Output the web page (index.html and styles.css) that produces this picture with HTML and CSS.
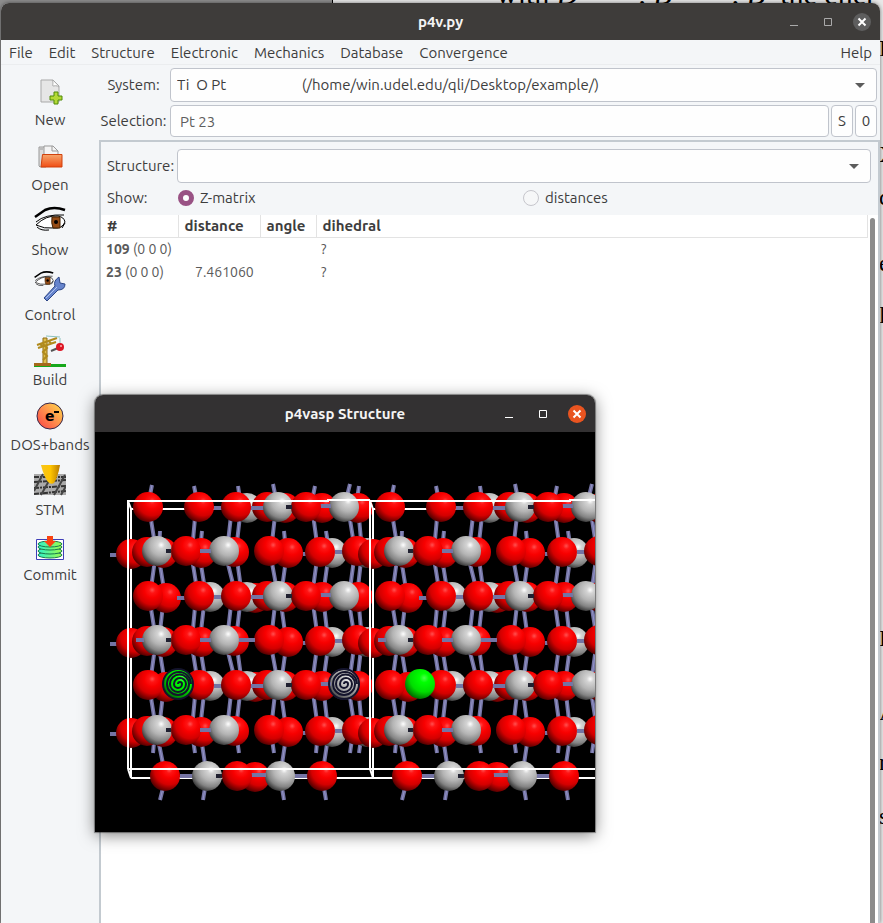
FILE: index.html
```html
<!DOCTYPE html>
<html lang="en">
  <head>
    <meta charset="utf-8">
    <title>p4v.py</title>
    <link rel="stylesheet" href="styles.css">
  </head>
  <body>
    <!-- paper lying behind the windows -->
    <div class="paper">
      <p class="paper-line">with <i>D</i><span class="gap"></span>, <i>B</i><span class="gap"></span>, <i>B</i> &nbsp;the ener</p>
      <span class="edge edge-1">H</span>
      <span class="edge edge-2">X</span>
      <span class="edge edge-3">c</span>
      <span class="edge edge-4">e</span>
      <span class="edge edge-5">l</span>
      <span class="edge edge-6">L</span>
      <span class="edge edge-7">A</span>
      <span class="edge edge-8">r</span>
      <span class="edge edge-9">s</span>
    </div>

    <div class="window">
      <header class="titlebar">
        <h1>p4v.py</h1>
        <div class="controls">
          <button type="button" aria-label="Minimize"><svg width="18" height="18"><path d="M5 12.500h8"/></svg></button>
          <button type="button" aria-label="Maximize"><svg width="18" height="18"><path d="M5.500 5.500h7v7h-7z"/></svg></button>
          <button type="button" class="close" aria-label="Close"><svg width="18" height="18"><path d="M5.500 5.500l7 7m0-7l-7 7"/></svg></button>
        </div>
      </header>

      <nav class="menubar">
        <a href="#">File</a>
        <a href="#">Edit</a>
        <a href="#">Structure</a>
        <a href="#">Electronic</a>
        <a href="#">Mechanics</a>
        <a href="#">Database</a>
        <a href="#">Convergence</a>
        <a href="#" class="help">Help</a>
      </nav>

      <div class="content">
        <aside class="toolbar">
          <button type="button">
            <svg width="32" height="32" viewBox="0 0 32 32">
              <path d="M7 5h12l6 6v16H7z" fill="#e6e6e6" stroke="#a9a9a9"/>
              <path d="M18 5c2 2 0 6 1 6s4-1 6 1" fill="#fff" stroke="#a9a9a9"/>
              <path d="M21 18h4v4h4v4h-4v4h-4v-4h-4v-4h4z" transform="translate(-1 -1)" fill="#b4d936" stroke="#4e8a06"/>
            </svg>
            New
          </button>
          <button type="button">
            <svg width="32" height="32" viewBox="0 0 32 32">
              <path d="M5 7h7v20H6l-1-1z" fill="#ddd" stroke="#999"/>
              <path d="M10 6h9l5 5v12H10z" fill="#f4f4f4" stroke="#999"/>
              <path d="M18 6v5h6M6 9h3" fill="none" stroke="#999"/>
              <path d="M8.500 14.500H28V27H7z" fill="url(#folder)" stroke="#d0400c"/>
            </svg>
            Open
          </button>
          <button type="button">
            <svg width="32" height="32" viewBox="0 0 32 32">
              <g id="eye">
                <path d="M1 12L11 5Q20 1 31 5" fill="none" stroke="#000" stroke-width="2.500"/>
                <path d="M2 17Q11 9 30 10M2 20Q12 10 24 11Q30 12 31 17Q28 24 20 23Q10 24 2 20z" fill="#fff" stroke="#000"/>
                <path d="M18 12h8v11h-7q-2-5-1-11z" fill="#964c16" stroke="#402000"/>
                <circle cx="22" cy="17" r="2"/>
                <path d="M3 22q4 4 12 3M28 23l3-5" fill="none" stroke="#000"/>
              </g>
            </svg>
            Show
          </button>
          <button type="button">
            <svg width="32" height="32" viewBox="0 0 32 32">
              <use href="#eye" transform="scale(.62)"/>
              <path d="M10 28l11-12q-2-5 4-9l1 6 5 1q0 6-7 6L13 31z" fill="#6684cc" stroke="#2d4686"/>
              <path d="M12 28l11-11" stroke="#aec3f0" fill="none"/>
            </svg>
            Control
          </button>
          <button type="button">
            <svg width="32" height="32" viewBox="0 0 32 32">
              <path d="M0 29h32v3H0z" fill="#16a81b"/>
              <path d="M0 28h17v3H0z" fill="#a5691b"/>
              <path d="M9 28V3h4v25" fill="#e0c050" stroke="#8e6a10"/>
              <path d="M3 10l20-7M4 13l18-6M6 9l3 3M14 6l3 2M9 9l4 4-4 4 4 4-4 4" fill="none" stroke="#b08a1c" stroke-width="2"/>
              <path d="M26 3v8M12 1l14 1" stroke="#8bc2be" fill="none"/>
              <path d="M17 16l7-3" stroke="#555" stroke-width="2"/>
              <circle cx="26" cy="12" r="4" fill="#dc1624"/>
              <circle cx="27" cy="11" r="1" fill="#ffb0b0"/>
            </svg>
            Build
          </button>
          <button type="button">
            <svg width="32" height="32" viewBox="0 0 32 32">
              <circle cx="16" cy="16" r="13" fill="url(#electron)" stroke="#35264a"/>
              <text x="11" y="21" class="electron">e</text>
              <path d="M20 12h5" stroke="#000" stroke-width="2"/>
            </svg>
            DOS+bands
          </button>
          <button type="button">
            <svg width="32" height="32" viewBox="0 0 32 32">
              <path d="M0 9h32v21H0z" fill="#aaa"/>
              <path d="M0 12h32M0 17l32-2M0 23l32-2M0 29l32-3" stroke="#333" stroke-width="2" stroke-dasharray="5 1 2 1"/>
              <path d="M9 9L0 26M31 10L20 30M16 14L7 30M32 21l-5 9" stroke="#444" stroke-width="2"/>
              <path d="M7 0h19q-2 12-6 18-3 2-6-1Q10 12 7 0z" fill="url(#tip)"/>
            </svg>
            STM
          </button>
          <button type="button">
            <svg width="32" height="32" viewBox="0 0 32 32">
              <path d="M2.500 9.500h27v20h-27z" fill="#fff" stroke="#3e3eb8"/>
              <g fill="url(#disk)" stroke="#18794c">
                <ellipse cx="16" cy="25" rx="12" ry="3"/>
                <ellipse cx="16" cy="21" rx="12" ry="3"/>
                <ellipse cx="16" cy="17" rx="12" ry="3"/>
                <ellipse cx="16" cy="14" rx="12" ry="3"/>
              </g>
              <path d="M13 6h6v5h3l-6 6-6-6h3z" fill="#fa4210"/>
            </svg>
            Commit
          </button>
        </aside>

        <main>
          <div class="field">
            <label for="system">System:</label>
            <div class="dropdown">
              <select id="system">
                <option>Ti&nbsp; O Pt&nbsp;&nbsp;&nbsp;&nbsp;&nbsp;&nbsp;&nbsp;&nbsp;&nbsp;&nbsp;&nbsp;&nbsp;&nbsp;&nbsp;&nbsp;&nbsp;&nbsp;&nbsp;&nbsp;&nbsp;&nbsp;&nbsp;(/home/win.udel.edu/qli/Desktop/example/)</option>
              </select>
            </div>
          </div>
          <div class="field">
            <label for="selection">Selection:</label>
            <input type="text" id="selection" value="Pt 23">
            <button type="button">S</button>
            <button type="button">0</button>
          </div>

          <section class="panel">
            <div class="structure-row">
              <label for="structure">Structure:</label>
              <div class="dropdown">
                <select id="structure"><option></option></select>
              </div>
            </div>
            <div class="show-row">
              <span>Show:</span>
              <label><input type="radio" name="show" checked>Z-matrix</label>
              <label><input type="radio" name="show">distances</label>
            </div>
            <div class="list">
              <table>
                <thead>
                  <tr><th class="num">#</th><th class="dist">distance</th><th class="angle">angle</th><th>dihedral</th></tr>
                </thead>
                <tbody>
                  <tr><td><b>109</b> (0 0 0)</td><td></td><td></td><td>?</td></tr>
                  <tr><td><b>23</b> (0 0 0)</td><td class="value">7.461060</td><td></td><td>?</td></tr>
                </tbody>
              </table>
              <div class="scrollbar"></div>
            </div>
          </section>
        </main>
      </div>
    </div>

    <div class="window viewer">
      <header class="titlebar">
        <h2>p4vasp Structure</h2>
        <div class="controls">
          <button type="button" aria-label="Minimize"><svg width="18" height="18"><path d="M5 12.500h8"/></svg></button>
          <button type="button" aria-label="Maximize"><svg width="18" height="18"><path d="M5.500 5.500h7v7h-7z"/></svg></button>
          <button type="button" class="close" aria-label="Close"><svg width="18" height="18"><path d="M5.500 5.500l7 7m0-7l-7 7"/></svg></button>
        </div>
      </header>
      <svg class="scene" viewBox="0 0 500 400">
        <defs>
          <linearGradient id="folder" x2="0" y2="1"><stop stop-color="#f6a66c"/><stop offset="1" stop-color="#f04d14"/></linearGradient>
          <linearGradient id="electron" x1="1" x2="0" y2="1"><stop stop-color="#ffe04a"/><stop offset=".6" stop-color="#ff7e4c"/><stop offset="1" stop-color="#f83e45"/></linearGradient>
          <linearGradient id="tip"><stop stop-color="#f7c51c"/><stop offset=".5" stop-color="#ffc400"/><stop offset="1" stop-color="#b97c00"/></linearGradient>
          <linearGradient id="disk"><stop stop-color="#2ff0c8"/><stop offset="1" stop-color="#9cfc4e"/></linearGradient>
          <radialGradient id="red" cx=".64" cy=".3" r=".75">
            <stop stop-color="#ff5050"/><stop offset=".14" stop-color="#ff1414"/><stop offset=".35" stop-color="#f80000"/><stop offset=".65" stop-color="#d40000"/><stop offset="1" stop-color="#480000"/>
          </radialGradient>
          <radialGradient id="grey" cx=".64" cy=".3" r=".78">
            <stop stop-color="#fff"/><stop offset=".15" stop-color="#d4d4d4"/><stop offset=".45" stop-color="#b4b4b4"/><stop offset=".72" stop-color="#848484"/><stop offset="1" stop-color="#202020"/>
          </radialGradient>
          <radialGradient id="green" cx=".64" cy=".3" r=".78">
            <stop stop-color="#4cff4c"/><stop offset=".2" stop-color="#0f0"/><stop offset=".6" stop-color="#0d0"/><stop offset="1" stop-color="#050"/>
          </radialGradient>
          <circle id="o" r="15" fill="url(#red)"/>
          <circle id="ti" r="15" fill="url(#grey)"/>
          <circle id="pt" r="15" fill="url(#green)"/>
          <g id="spiral" class="spiral">
            <circle r="15"/>
            <path d="M0 0a2 2 0 0 1 4 0a4 4 0 0 1-8 0a6 6 0 0 1 12 0a8 8 0 0 1-16 0a9.500 9.500 0 0 1 19 0a11 11 0 0 1-22 0a12 12 0 0 1 24 0"/>
          </g>

          <!-- layer with titanium at the right of each pair -->
          <g id="layer-a">
            <use href="#ti" x="152" y="1"/><use href="#o" x="172"/><use href="#o" x="190" y="1"/><use href="#o" x="227" y="1"/><use href="#o" x="263" y="1"/>
            <path class="bond" d="M119 1h10M155 1h18M224-1h18"/>
            <use href="#o" x="53"/><use href="#o" x="104"/><use href="#o" x="141"/><use href="#ti" x="183"/><use href="#o" x="211"/><use href="#ti" x="249"/>
            <path class="bond" d="M226-1h10"/>
            <path class="stub" d="M191 0h6"/>
          </g>
          <g id="extra-a">
            <use href="#o" x="71" y="2"/><use href="#ti" x="115" y="1"/><use href="#o" x="160" y="2"/>
            <path class="bond" d="M82 2h9"/>
          </g>
          <!-- layer with titanium over the oxygens -->
          <g id="layer-b">
            <use href="#ti" x="272" y="2"/><use href="#o" x="36" y="3"/><use href="#o" x="52" y="1"/><use href="#o" x="68" y="2"/>
            <use href="#o" x="106" y="2"/><use href="#o" x="139" y="1"/><use href="#o" x="193" y="2"/><use href="#ti" x="237" y="2"/>
            <path class="bond" d="M240 1h8M208 3h3"/>
            <use href="#ti" x="62"/><use href="#o" x="91"/><use href="#ti" x="129"/><use href="#o" x="174"/><use href="#o" x="225" y="1"/><use href="#o" x="262"/>
            <path class="bond" d="M105 0h11"/>
            <path class="stub" d="M71 0h5"/>
          </g>
          <g id="layer-c">
            <use href="#o" x="160" y="1"/>
            <path class="bond" d="M85 0h16M155-1h20M198 0h18"/>
            <use href="#o" x="70"/><use href="#ti" x="112"/><use href="#o" x="142"/><use href="#ti" x="185"/><use href="#o" x="227"/>
            <path class="bond" d="M157-1h14"/>
            <path class="stub" d="M121 0h6"/>
          </g>
          <!-- upright bonds between two layers -->
          <path id="bonds-a" d="M54 0l7 44M101 0l-4 44M137 0l-5 44M146 0l-5 44M181 0l-5 44M217 0l6 44M253 0l7 44M263 0l4 44"/>
          <path id="bonds-a2" d="M69 0l-5 44M110 0l-5 44M185 0l6 44M228 0l5 44"/>
          <path id="bonds-b" d="M61 0l-6 44M63 0l7 44M96 0l7 44M104 0l7 44M130 0l11 44M141 0l6 44M175 0l8 44M192 0l-6 44M223 0l-6 44M234 0l-6 44M260 0l-6 44M267 0l-5 44"/>
          <g id="upright">
            <path d="M57 53l-4 20M99 54l4 20M143 54l3 20M178 52l4 20M220 54l-4 20M255 52l-5 20M264 54l-3 20M65 99l-1 20M107 99l-2 20M189 99l2 20M231 99l3 20"/>
            <path d="M60 300l-2 21M97 300l3 21M141 300l3 21M176 300l3 21M223 300l-2 21M258 300l-3 21M267 300l-3 21"/>
            <path d="M64 312l4 20M107 312l3 20M190 312l-3 20M232 312l-3 20M68 356l-3 12M110 356l-2 12M187 356l2 12M229 356l2 12"/>
            <use href="#bonds-a" y="75"/><use href="#bonds-b" y="120"/>
            <use href="#bonds-a" y="164"/><use href="#bonds-a2" y="164"/><use href="#bonds-b" y="208"/>
            <use href="#bonds-a" y="253"/><use href="#bonds-a2" y="253"/>
          </g>

          <g id="cell">
            <path class="frame" d="M33 69l3 8v269l-3-9M36 77h242M36 346h242"/>
            <use href="#upright" class="bond"/>
            <use href="#upright" class="shine"/>
            <use href="#layer-a" y="75"/>
            <use href="#layer-b" y="119"/>
            <use href="#extra-a" y="164"/><use href="#layer-a" y="164"/>
            <use href="#layer-b" y="208"/>
            <path class="bond" d="M41 208h8M144 208h16"/>
            <use href="#extra-a" y="253"/><use href="#layer-a" y="253"/><use href="#pt" x="83" y="252"/>
            <use href="#layer-b" y="298"/>
            <use href="#layer-c" y="344"/>
            <path class="frame" d="M33 69h200v-1h42M33 337h242M33 68v269"/>
          </g>
        </defs>
        <rect width="500" height="400"/>
        <path class="bond" d="M15 123h14M15 212h14M15 302h14"/>
        <use href="#cell"/>
        <use href="#cell" x="242"/>
        <use href="#spiral" x="83" y="252"/>
        <use href="#spiral" x="249" y="252"/>
      </svg>
    </div>
  </body>
</html>
```

FILE: styles.css
```css
* {
  box-sizing: border-box;
}

body {
  margin: 0;
  height: 100vh;
  overflow: hidden;
  padding: 3px 3px 0 1px;
  font-family: Ubuntu, "Noto Sans", sans-serif;
  font-size: 15px;
  line-height: 20px;
  color: #3d3d3d;
  background-color: #8e8e8e;
}

button, input, select {
  font: inherit;
  color: inherit;
}

h1, h2, p {
  margin: 0;
}

/* paper behind */
.paper {
  position: absolute;
  inset: 0 0 0 332px;
  overflow: hidden;
  background-color: #e8e8e8;
  border-left: 1px solid #000;
  font-family: "Liberation Serif", serif;
  font-size: 30px;
  color: #000;
}

.paper-line {
  position: absolute;
  left: 163px;
  top: -16px;
  white-space: nowrap;
}

.gap {
  display: inline-block;
  width: 60px;
}

.edge {
  position: absolute;
  left: calc(100% - 4px);
  font-size: 24px;
}

.edge-1 { top: 38px; }
.edge-2 { top: 144px; }
.edge-3 { top: 187px; }
.edge-4 { top: 253px; }
.edge-5 { top: 305px; }
.edge-6 { top: 628px; }
.edge-7 { top: 702px; }
.edge-8 { top: 752px; }
.edge-9 { top: 806px; }

/* windows */
.window {
  position: relative;
  display: flex;
  flex-direction: column;
  height: 100%;
  background-color: #f4f6f8;
  border-radius: 8px 8px 0 0;
  box-shadow: 0 0 4px rgba(0, 0, 0, 0.5);
}

.titlebar {
  display: grid;
  grid-template-columns: 1fr auto 1fr;
  align-items: center;
  height: 37px;
  flex: none;
  padding: 0 9px;
  color: #f4f4f4;
  background-color: #3e3c3a;
  border-radius: 8px 8px 0 0;
}

.titlebar h1, .titlebar h2 {
  grid-column: 2;
  font-size: 15px;
  font-weight: bold;
}

.controls {
  display: flex;
  justify-content: flex-end;
  gap: 16px;
}

.controls button {
  width: 18px;
  height: 18px;
  padding: 0;
  border: none;
  border-radius: 50%;
  background: none;
}

.controls svg {
  display: block;
  fill: none;
  stroke: #aaa;
}

.controls .close {
  background-color: #5e5e5e;
}

.controls .close svg {
  stroke: #fff;
  stroke-width: 2;
}

.menubar {
  display: flex;
  gap: 16px;
  height: 25px;
  flex: none;
  padding: 3px 8px 0;
  border-bottom: 1px solid #ebedef;
}

.menubar a {
  color: inherit;
  text-decoration: none;
}

.menubar .help {
  margin-left: auto;
}

.content {
  display: flex;
  flex: 1;
  min-height: 0;
}

.toolbar {
  width: 98px;
  flex: none;
  padding-top: 10px;
}

.toolbar button {
  display: flex;
  flex-direction: column;
  align-items: center;
  justify-content: space-between;
  width: 100%;
  height: 55px;
  margin-bottom: 10px;
  padding: 0;
  border: none;
  background: none;
}

.electron {
  font: bold 14px "DejaVu Sans", sans-serif;
}

main {
  display: flex;
  flex-direction: column;
  flex: 1;
  min-width: 0;
  padding-top: 3px;
}

.field {
  display: flex;
  align-items: center;
  gap: 2px;
  margin: 0 3px 3px 0;
}

.field label {
  width: 69px;
  text-align: center;
  white-space: nowrap;
}

.field input {
  flex: 1;
  min-width: 0;
  height: 32px;
  padding: 0 9px;
  color: #5e5e5e;
}

.field button {
  width: 22px;
  height: 32px;
  padding: 0;
}

.field input, .field button, .dropdown select {
  border: 1px solid #c0c4cc;
  border-radius: 4px;
  background-color: #fefefe;
}

.dropdown {
  display: grid;
  flex: 1;
  align-items: center;
}

.dropdown select {
  grid-area: 1 / 1;
  appearance: none;
  width: 100%;
  height: 34px;
  padding: 0 6px;
}

.dropdown::after {
  content: "";
  grid-area: 1 / 1;
  justify-self: end;
  margin-right: 12px;
  border: 5px solid transparent;
  border-top-color: #5c5c5c;
  border-bottom: none;
  pointer-events: none;
}

.panel {
  display: flex;
  flex-direction: column;
  flex: 1;
  min-height: 0;
  border: 2px solid #c3cad0;
  border-bottom: none;
}

.structure-row {
  display: flex;
  align-items: center;
  padding: 7px 7px 0 6px;
}

.structure-row label, .show-row > span {
  width: 70px;
}

.show-row {
  display: grid;
  grid-template-columns: 71px 1fr 1fr;
  align-items: center;
  height: 32px;
  padding: 0 10px 2px 6px;
}

.show-row label {
  display: flex;
  align-items: center;
  gap: 6px;
}

.show-row input {
  appearance: none;
  width: 16px;
  height: 16px;
  margin: 0;
  border: 1px solid #c6c6cc;
  border-radius: 50%;
  background-color: #f6f7f8;
}

.show-row input:checked {
  border: 5px solid #995284;
  background-color: #fff;
}

.list {
  display: flex;
  justify-content: space-between;
  flex: 1;
  min-height: 0;
  background-color: #fff;
}

table {
  width: calc(100% - 10px);
  align-self: flex-start;
  table-layout: fixed;
  border-collapse: collapse;
}

th, td {
  height: 23px;
  padding: 0 5px;
  text-align: left;
  white-space: nowrap;
}

th {
  height: 22px;
  padding: 0 6px;
  border-right: 1px solid #e3e3e3;
  border-bottom: 1px solid #e3e3e3;
}

td {
  font-size: 14px;
  color: #5a5a5a;
}

.num { width: 77px; }
.dist { width: 82px; }
.angle { width: 56px; }

.value {
  padding-left: 17px;
}

.scrollbar {
  width: 5px;
  margin: 3px 3px 0 0;
  border-radius: 3px 3px 0 0;
  background-color: #8b8b8b;
}

/* structure viewer */
.viewer {
  position: absolute;
  left: 95px;
  top: 395px;
  width: 500px;
  height: auto;
  box-shadow: 0 0 1px 1px rgba(0, 0, 0, 0.4), 0 3px 16px rgba(0, 0, 0, 0.5);
}

.viewer .titlebar {
  background-color: #333132;
}

.viewer .controls svg {
  stroke: #fff;
}

.viewer .controls .close {
  background-color: #e95420;
}

.scene {
  display: block;
  width: 100%;
}

.bond {
  fill: none;
  stroke: #7474a4;
  stroke-width: 4;
}

.shine {
  fill: none;
  stroke: #9494c8;
  stroke-width: 1;
}

.stub {
  stroke: #202030;
  stroke-width: 4;
}

.frame {
  fill: none;
  stroke: #fff;
  stroke-width: 2;
}

.spiral {
  fill: none;
  stroke: #14142c;
  stroke-width: 2;
}
```
